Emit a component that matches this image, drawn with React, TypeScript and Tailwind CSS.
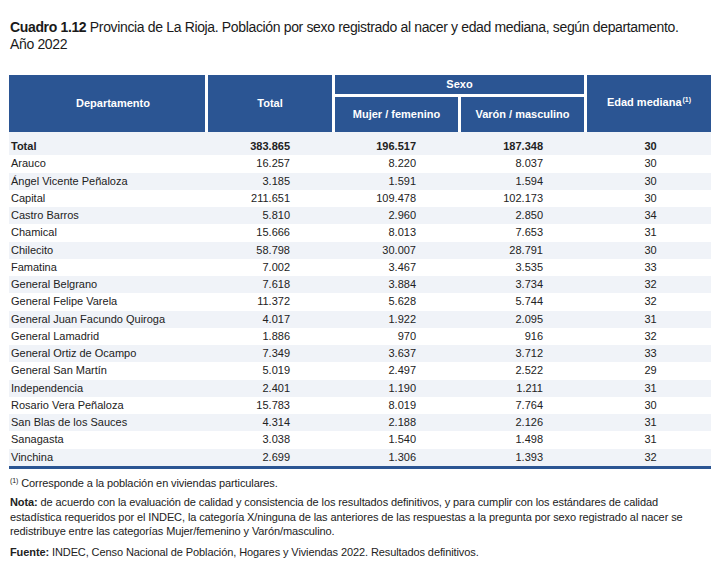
import React from "react";

const rows: [string, string, string, string, string][] = [
  ["Arauco", "16.257", "8.220", "8.037", "30"],
  ["Ángel Vicente Peñaloza", "3.185", "1.591", "1.594", "30"],
  ["Capital", "211.651", "109.478", "102.173", "30"],
  ["Castro Barros", "5.810", "2.960", "2.850", "34"],
  ["Chamical", "15.666", "8.013", "7.653", "31"],
  ["Chilecito", "58.798", "30.007", "28.791", "30"],
  ["Famatina", "7.002", "3.467", "3.535", "33"],
  ["General Belgrano", "7.618", "3.884", "3.734", "32"],
  ["General Felipe Varela", "11.372", "5.628", "5.744", "32"],
  ["General Juan Facundo Quiroga", "4.017", "1.922", "2.095", "31"],
  ["General Lamadrid", "1.886", "970", "916", "32"],
  ["General Ortiz de Ocampo", "7.349", "3.637", "3.712", "33"],
  ["General San Martín", "5.019", "2.497", "2.522", "29"],
  ["Independencia", "2.401", "1.190", "1.211", "31"],
  ["Rosario Vera Peñaloza", "15.783", "8.019", "7.764", "30"],
  ["San Blas de los Sauces", "4.314", "2.188", "2.126", "31"],
  ["Sanagasta", "3.038", "1.540", "1.498", "31"],
  ["Vinchina", "2.699", "1.306", "1.393", "32"],
];

const cols = "grid grid-cols-[196px_124px_123px_123px_124px] gap-x-[3px]";

function Row({ r, light, bold }: { r: string[]; light: boolean; bold?: boolean }) {
  return (
    <div
      className={`${cols} items-center h-[17.25px] leading-[17px] ${light ? "bg-[#f0f3f8]" : "bg-white"} ${bold ? "font-bold" : ""}`}
    >
      <div className="pl-[2px] whitespace-nowrap">{r[0]}</div>
      <div className="text-right pr-[42px]">{r[1]}</div>
      <div className="text-right pr-[42px]">{r[2]}</div>
      <div className="text-right pr-[41px]">{r[3]}</div>
      <div className="text-center pl-[3px]">{r[4]}</div>
    </div>
  );
}

export default function App() {
  return (
    <div
      className="w-[727px] h-[588px] bg-white text-[#222] pl-[9px] pt-[19px]"
      style={{ fontFamily: '"Liberation Sans", Arial, sans-serif' }}
    >
      <div className="text-[14px] leading-[17px] tracking-[-0.35px] text-[#1a1a1a] pl-[1px]">
        <span className="font-bold">Cuadro 1.12</span> Provincia de La Rioja. Población por sexo registrado al nacer y edad mediana, según departamento.
        <br />
        Año 2022
      </div>

      <div className="mt-[22px] w-[702px] text-[11px]">
        {/* Header */}
        <div className="grid grid-cols-[196px_124px_123px_123px_124px] grid-rows-[19px_35px] gap-[3px] text-white font-bold">
          <div className="row-span-2 bg-[#2b5593] flex items-center justify-center pl-[12px]">Departamento</div>
          <div className="row-span-2 bg-[#2b5593] flex items-center justify-center">Total</div>
          <div className="col-span-2 bg-[#2b5593] flex items-center justify-center">Sexo</div>
          <div className="row-span-2 bg-[#2b5593] flex items-center justify-center">
            <span className="pb-[3px]">
              Edad mediana<sup className="text-[7px] -top-[4px] ml-[1px]">(1)</sup>
            </span>
          </div>
          <div className="bg-[#2b5593] flex items-center justify-center">Mujer / femenino</div>
          <div className="bg-[#2b5593] flex items-center justify-center">Varón / masculino</div>
        </div>

        {/* Body */}
        <div className="bg-[#f0f3f8] pt-[6px]">
          <Row r={["Total", "383.865", "196.517", "187.348", "30"]} light bold />
        </div>
        {rows.map((r, i) => (
          <Row key={r[0]} r={r} light={i % 2 === 1} />
        ))}
        <div className="h-[3px] bg-[#2b5593]" />
      </div>

      <div className="text-[11px] leading-[14.5px] text-[#222] pl-[1px] pr-[20px] tracking-[-0.1px]">
        <p className="mt-[7px]">
          <sup className="text-[7px] -top-[4px]">(1)</sup> Corresponde a la población en viviendas particulares.
        </p>
        <p className="mt-[5px]">
          <span className="font-bold">Nota:</span> de acuerdo con la evaluación de calidad y consistencia de los resultados definitivos, y para cumplir con los estándares de calidad estadística requeridos por el INDEC, la categoría X/ninguna de las anteriores de las respuestas a la pregunta por sexo registrado al nacer se redistribuye entre las categorías Mujer/femenino y Varón/masculino.
        </p>
        <p className="mt-[6px]">
          <span className="font-bold">Fuente:</span> INDEC, Censo Nacional de Población, Hogares y Viviendas 2022. Resultados definitivos.
        </p>
      </div>
    </div>
  );
}
